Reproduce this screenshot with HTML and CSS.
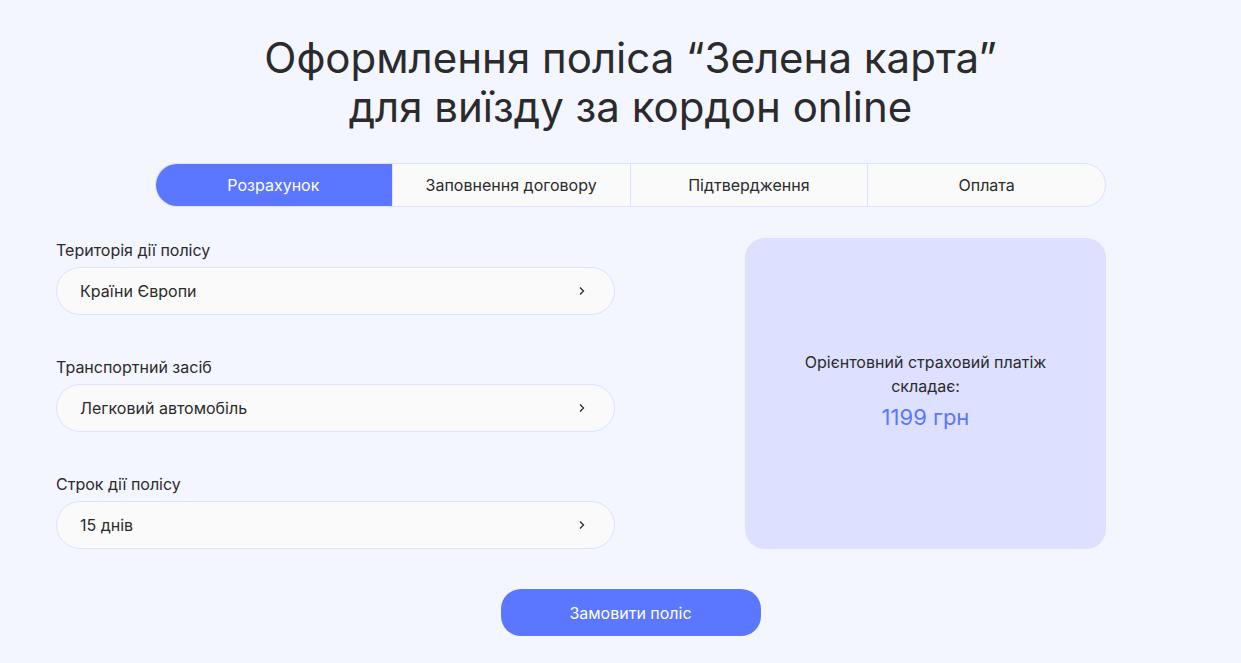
FILE: index.html
```html
<!DOCTYPE html>
<html lang="uk">
<head>
<meta charset="utf-8">
<title>Зелена карта</title>
<link rel="stylesheet" href="styles.css">
</head>
<body>
<main class="page">
  <h1 class="title">Оформлення поліса “Зелена карта”<br>для виїзду за кордон online</h1>
  <nav class="steps">
    <div class="step step-active">Розрахунок</div>
    <div class="step">Заповнення договору</div>
    <div class="step">Підтвердження</div>
    <div class="step">Оплата</div>
  </nav>
  <section class="calc">
    <div class="fields">
      <div class="field">
        <div class="label">Територія дії полісу</div>
        <div class="select"><span>Країни Європи</span><svg class="chev" width="8" height="12" viewBox="0 0 8 12"><path d="M2 2.5l3.5 3.5-3.5 3.5" fill="none" stroke="#2b2b2b" stroke-width="1.3"/></svg></div>
      </div>
      <div class="field">
        <div class="label">Транспортний засіб</div>
        <div class="select"><span>Легковий автомобіль</span><svg class="chev" width="8" height="12" viewBox="0 0 8 12"><path d="M2 2.5l3.5 3.5-3.5 3.5" fill="none" stroke="#2b2b2b" stroke-width="1.3"/></svg></div>
      </div>
      <div class="field">
        <div class="label">Строк дії полісу</div>
        <div class="select"><span>15 днів</span><svg class="chev" width="8" height="12" viewBox="0 0 8 12"><path d="M2 2.5l3.5 3.5-3.5 3.5" fill="none" stroke="#2b2b2b" stroke-width="1.3"/></svg></div>
      </div>
    </div>
    <div class="result">
      <p class="result-text">Орієнтовний страховий платіж<br>складає:</p>
      <p class="price">1199 грн</p>
    </div>
  </section>
  <div class="actions">
    <button class="order">Замовити поліс</button>
  </div>
</main>
</body>
</html>
```
FILE: styles.css
```css
* { box-sizing: border-box; }
html, body { margin: 0; padding: 0; }
body {
  background: #f3f5ff;
  font-family: Inter, "Noto Sans", sans-serif;
  color: #2b2b2b;
  width: 1241px;
  height: 663px;
  overflow: hidden;
}
.page {
  padding-top: 33px;
  display: flex;
  flex-direction: column;
}
.title {
  margin: 0;
  padding-left: 20px;
  font-size: 42px;
  line-height: 49px;
  font-weight: 400;
  text-align: center;
  color: #2b2b2b;
}
.steps {
  margin: 32px 0 0 155px;
  width: 951px;
  height: 44px;
  display: flex;
  background: #fafafa;
  border: 1px solid #dde1ff;
  border-radius: 22px;
  overflow: hidden;
}
.step {
  flex: 1;
  display: flex;
  align-items: center;
  justify-content: center;
  font-size: 16px;
  border-left: 1px solid #dde1ff;
}
.step:first-child { border-left: none; }
.step-active {
  background: #5b76ff;
  color: #fff;
  border-radius: 22px 0 0 22px;
  margin: -1px 0 -1px -1px;
}
.calc {
  margin: 31px 0 0 56px;
  width: 1050px;
  display: flex;
  justify-content: space-between;
}
.fields {
  width: 559px;
  padding-top: 1px;
  display: flex;
  flex-direction: column;
  gap: 41px;
}
.label {
  font-size: 16px;
  line-height: 22px;
  margin-bottom: 6px;
}
.select {
  height: 48px;
  background: #fafafa;
  border: 1px solid #dde1ff;
  border-radius: 24px;
  display: flex;
  align-items: center;
  justify-content: space-between;
  padding: 0 28px 0 23px;
  font-size: 16px;
}
.chev { display: block; }
.result {
  width: 361px;
  height: 311px;
  background: #dde0ff;
  border-radius: 20px;
  display: flex;
  flex-direction: column;
  align-items: center;
  justify-content: center;
  text-align: center;
  padding-bottom: 6px;
}
.result-text {
  margin: 0;
  font-size: 16px;
  line-height: 24px;
}
.price {
  margin: 4px 0 0;
  font-size: 22px;
  line-height: 30px;
  font-weight: 400;
  color: #5b76ff;
}
.actions {
  margin-top: 40px;
  padding-left: 20px;
  display: flex;
  justify-content: center;
}
.order {
  width: 260px;
  height: 47px;
  border: none;
  border-radius: 20px;
  background: #5b76ff;
  color: #fff;
  font-family: Inter, "Noto Sans", sans-serif;
  font-size: 16px;
  font-weight: 400;
}
```
